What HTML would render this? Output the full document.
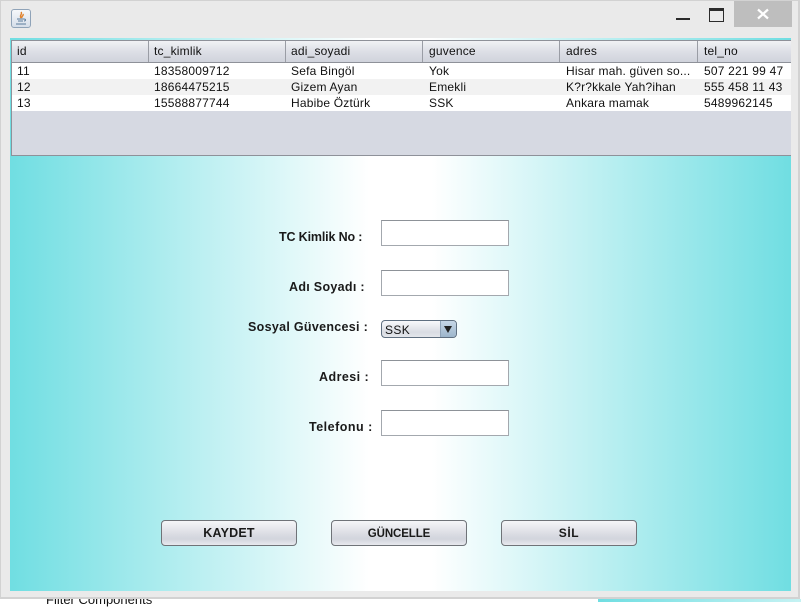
<!DOCTYPE html>
<html><head><meta charset="utf-8">
<style>
html,body{margin:0;padding:0;width:801px;height:602px;overflow:hidden;background:#fff;font-family:"Liberation Sans",sans-serif;}
.a{position:absolute;white-space:nowrap;}
#win{position:absolute;left:0;top:0;width:797px;height:596px;background:#EAEAEA;border:1px solid #D2D2D2;border-width:1px 2px 2px 1px;}
#panel{position:absolute;left:10px;top:38px;width:781px;height:553px;background:linear-gradient(90deg,#70DEE2 0%,#fff 46%,#fff 54%,#70DEE2 100%);}
#tbl{position:absolute;left:11px;top:40px;width:780px;height:116px;background:#D6D9E2;border-left:1px solid #8E9199;border-bottom:1px solid #8E9199;border-top:1px solid #8E9199;box-sizing:border-box;overflow:hidden;}
.h{position:absolute;top:0;height:21px;background:linear-gradient(#F1F2F5,#DDDFE6 50%,#D0D3DC);border-right:1px solid #9A9DA5;box-sizing:border-box;}
.t{position:absolute;font-size:12px;line-height:14px;color:#111;letter-spacing:.2px;white-space:nowrap;}
.r{position:absolute;left:0;width:780px;height:16px;}
.l{position:absolute;font-weight:bold;font-size:12.5px;line-height:15px;color:#1a1a1a;white-space:nowrap;}
.f{position:absolute;left:381px;width:128px;height:26px;background:#fff;border:1px solid #A3A8AE;border-top-color:#8D9298;box-sizing:border-box;}
.b{position:absolute;top:520px;width:136px;height:26px;border:1px solid #6F7378;border-radius:4px;box-sizing:border-box;background:linear-gradient(#F5F6F8,#DADCE3 55%,#D2D5DD 75%,#E8E9EE);font-weight:bold;font-size:12px;line-height:25px;text-align:center;color:#1a1a1a;}
</style></head><body>
<div class="a" style="left:598px;top:599px;width:203px;height:3px;background:linear-gradient(90deg,#70DEE2,#C5F2F3);"></div>
<span class="a" style="left:46px;top:592px;font-size:13px;line-height:15px;color:#111;">Filter Components</span>
<div class="a" style="left:799px;top:0;width:2px;height:599px;background:#fff;"></div>
<div id="win"></div>
<div class="a" style="left:11px;top:9px;width:20px;height:19px;box-sizing:border-box;border:1px solid #8FA3B8;border-radius:3px;background:linear-gradient(#F6F8FB,#D5DEE9);"></div>
<svg class="a" style="left:11px;top:9px" width="20" height="19" viewBox="0 0 20 19"><path d="M10 3c2 2-2 3 0 6M12 5c1 2-2 2-1 4" stroke="#E0812B" stroke-width="1.4" fill="none"/><path d="M6 10h7M7 12h5M5 15h10" stroke="#5B7C9C" stroke-width="1" fill="none"/><path d="M13 10c2 0 2 2 0 2" stroke="#5B7C9C" fill="none"/></svg>
<div class="a" style="left:676px;top:18px;width:14px;height:2px;background:#2b2b2b;"></div>
<div class="a" style="left:709px;top:8px;width:13px;height:10px;border:1px solid #2b2b2b;border-top:3px solid #2b2b2b;"></div>
<div class="a" style="left:734px;top:1px;width:58px;height:26px;background:#BEBEBE;"></div>
<svg class="a" style="left:757px;top:8px" width="12" height="12" viewBox="0 0 12 12"><path d="M1 1.5L11 10.5M11 1.5L1 10.5" stroke="#fff" stroke-width="2.2"/></svg>
<div id="panel"></div>
<div id="tbl">
<div class="h" style="left:0;width:137px"></div>
<div class="h" style="left:137px;width:137px"></div>
<div class="h" style="left:274px;width:137px"></div>
<div class="h" style="left:411px;width:137px"></div>
<div class="h" style="left:548px;width:138px"></div>
<div class="h" style="left:686px;width:94px;border-right:0"></div>
<div class="a" style="left:0;top:21px;width:780px;height:1px;background:#8E9199;"></div>
<div class="r" style="top:22px;background:#fff"></div>
<div class="r" style="top:38px;background:#F2F2F2"></div>
<div class="r" style="top:54px;background:#fff"></div>
<span class="t" style="left:5px;top:3px">id</span><span class="t" style="left:142px;top:3px">tc_kimlik</span><span class="t" style="left:279px;top:3px">adi_soyadi</span><span class="t" style="left:417px;top:3px">guvence</span><span class="t" style="left:554px;top:3px">adres</span><span class="t" style="left:692px;top:3px">tel_no</span>
<span class="t" style="left:5px;top:23px">11</span><span class="t" style="left:142px;top:23px">18358009712</span><span class="t" style="left:279px;top:23px">Sefa Bingöl</span><span class="t" style="left:417px;top:23px">Yok</span><span class="t" style="left:554px;top:23px">Hisar mah. güven so...</span><span class="t" style="left:692px;top:23px">507 221 99 47</span>
<span class="t" style="left:5px;top:39px">12</span><span class="t" style="left:142px;top:39px">18664475215</span><span class="t" style="left:279px;top:39px">Gizem Ayan</span><span class="t" style="left:417px;top:39px">Emekli</span><span class="t" style="left:554px;top:39px">K?r?kkale Yah?ihan</span><span class="t" style="left:692px;top:39px">555 458 11 43</span>
<span class="t" style="left:5px;top:55px">13</span><span class="t" style="left:142px;top:55px">15588877744</span><span class="t" style="left:279px;top:55px">Habibe Öztürk</span><span class="t" style="left:417px;top:55px">SSK</span><span class="t" style="left:554px;top:55px">Ankara mamak</span><span class="t" style="left:692px;top:55px">5489962145</span>
</div>
<span class="l" style="left:279px;top:230px;letter-spacing:-.15px">TC Kimlik No :</span>
<span class="l" style="left:289px;top:280px;letter-spacing:.3px">Adı Soyadı :</span>
<span class="l" style="left:248px;top:320px;letter-spacing:.3px">Sosyal Güvencesi :</span>
<span class="l" style="left:319px;top:370px;letter-spacing:.45px">Adresi :</span>
<span class="l" style="left:309px;top:420px;letter-spacing:.5px">Telefonu :</span>
<div class="f" style="top:220px"></div>
<div class="f" style="top:270px"></div>
<div class="f" style="top:360px"></div>
<div class="f" style="top:410px"></div>
<div class="a" style="left:381px;top:320px;width:76px;height:18px;box-sizing:border-box;border:1px solid #5F6F80;border-radius:4px;background:linear-gradient(#F8F9FB,#D9DCE3 70%,#E4E6EB);overflow:hidden;">
<div class="a" style="left:58px;top:0;width:16px;height:16px;background:linear-gradient(#C6D6E6,#9DB6CC);border-left:1px solid #8FA3B8;"></div>
<span class="a" style="left:3px;top:2px;font-size:12px;line-height:14px;color:#111;letter-spacing:.4px;">SSK</span>
<svg class="a" style="left:62px;top:5px" width="8" height="7" viewBox="0 0 8 7"><path d="M0 0H8L4 7Z" fill="#222"/></svg>
</div>
<div class="b" style="left:161px;font-size:12.5px;letter-spacing:.2px">KAYDET</div>
<div class="b" style="left:331px;font-size:11.5px;line-height:27px;letter-spacing:-.1px">GÜNCELLE</div>
<div class="b" style="left:501px;letter-spacing:.6px">SİL</div>
</body></html>
